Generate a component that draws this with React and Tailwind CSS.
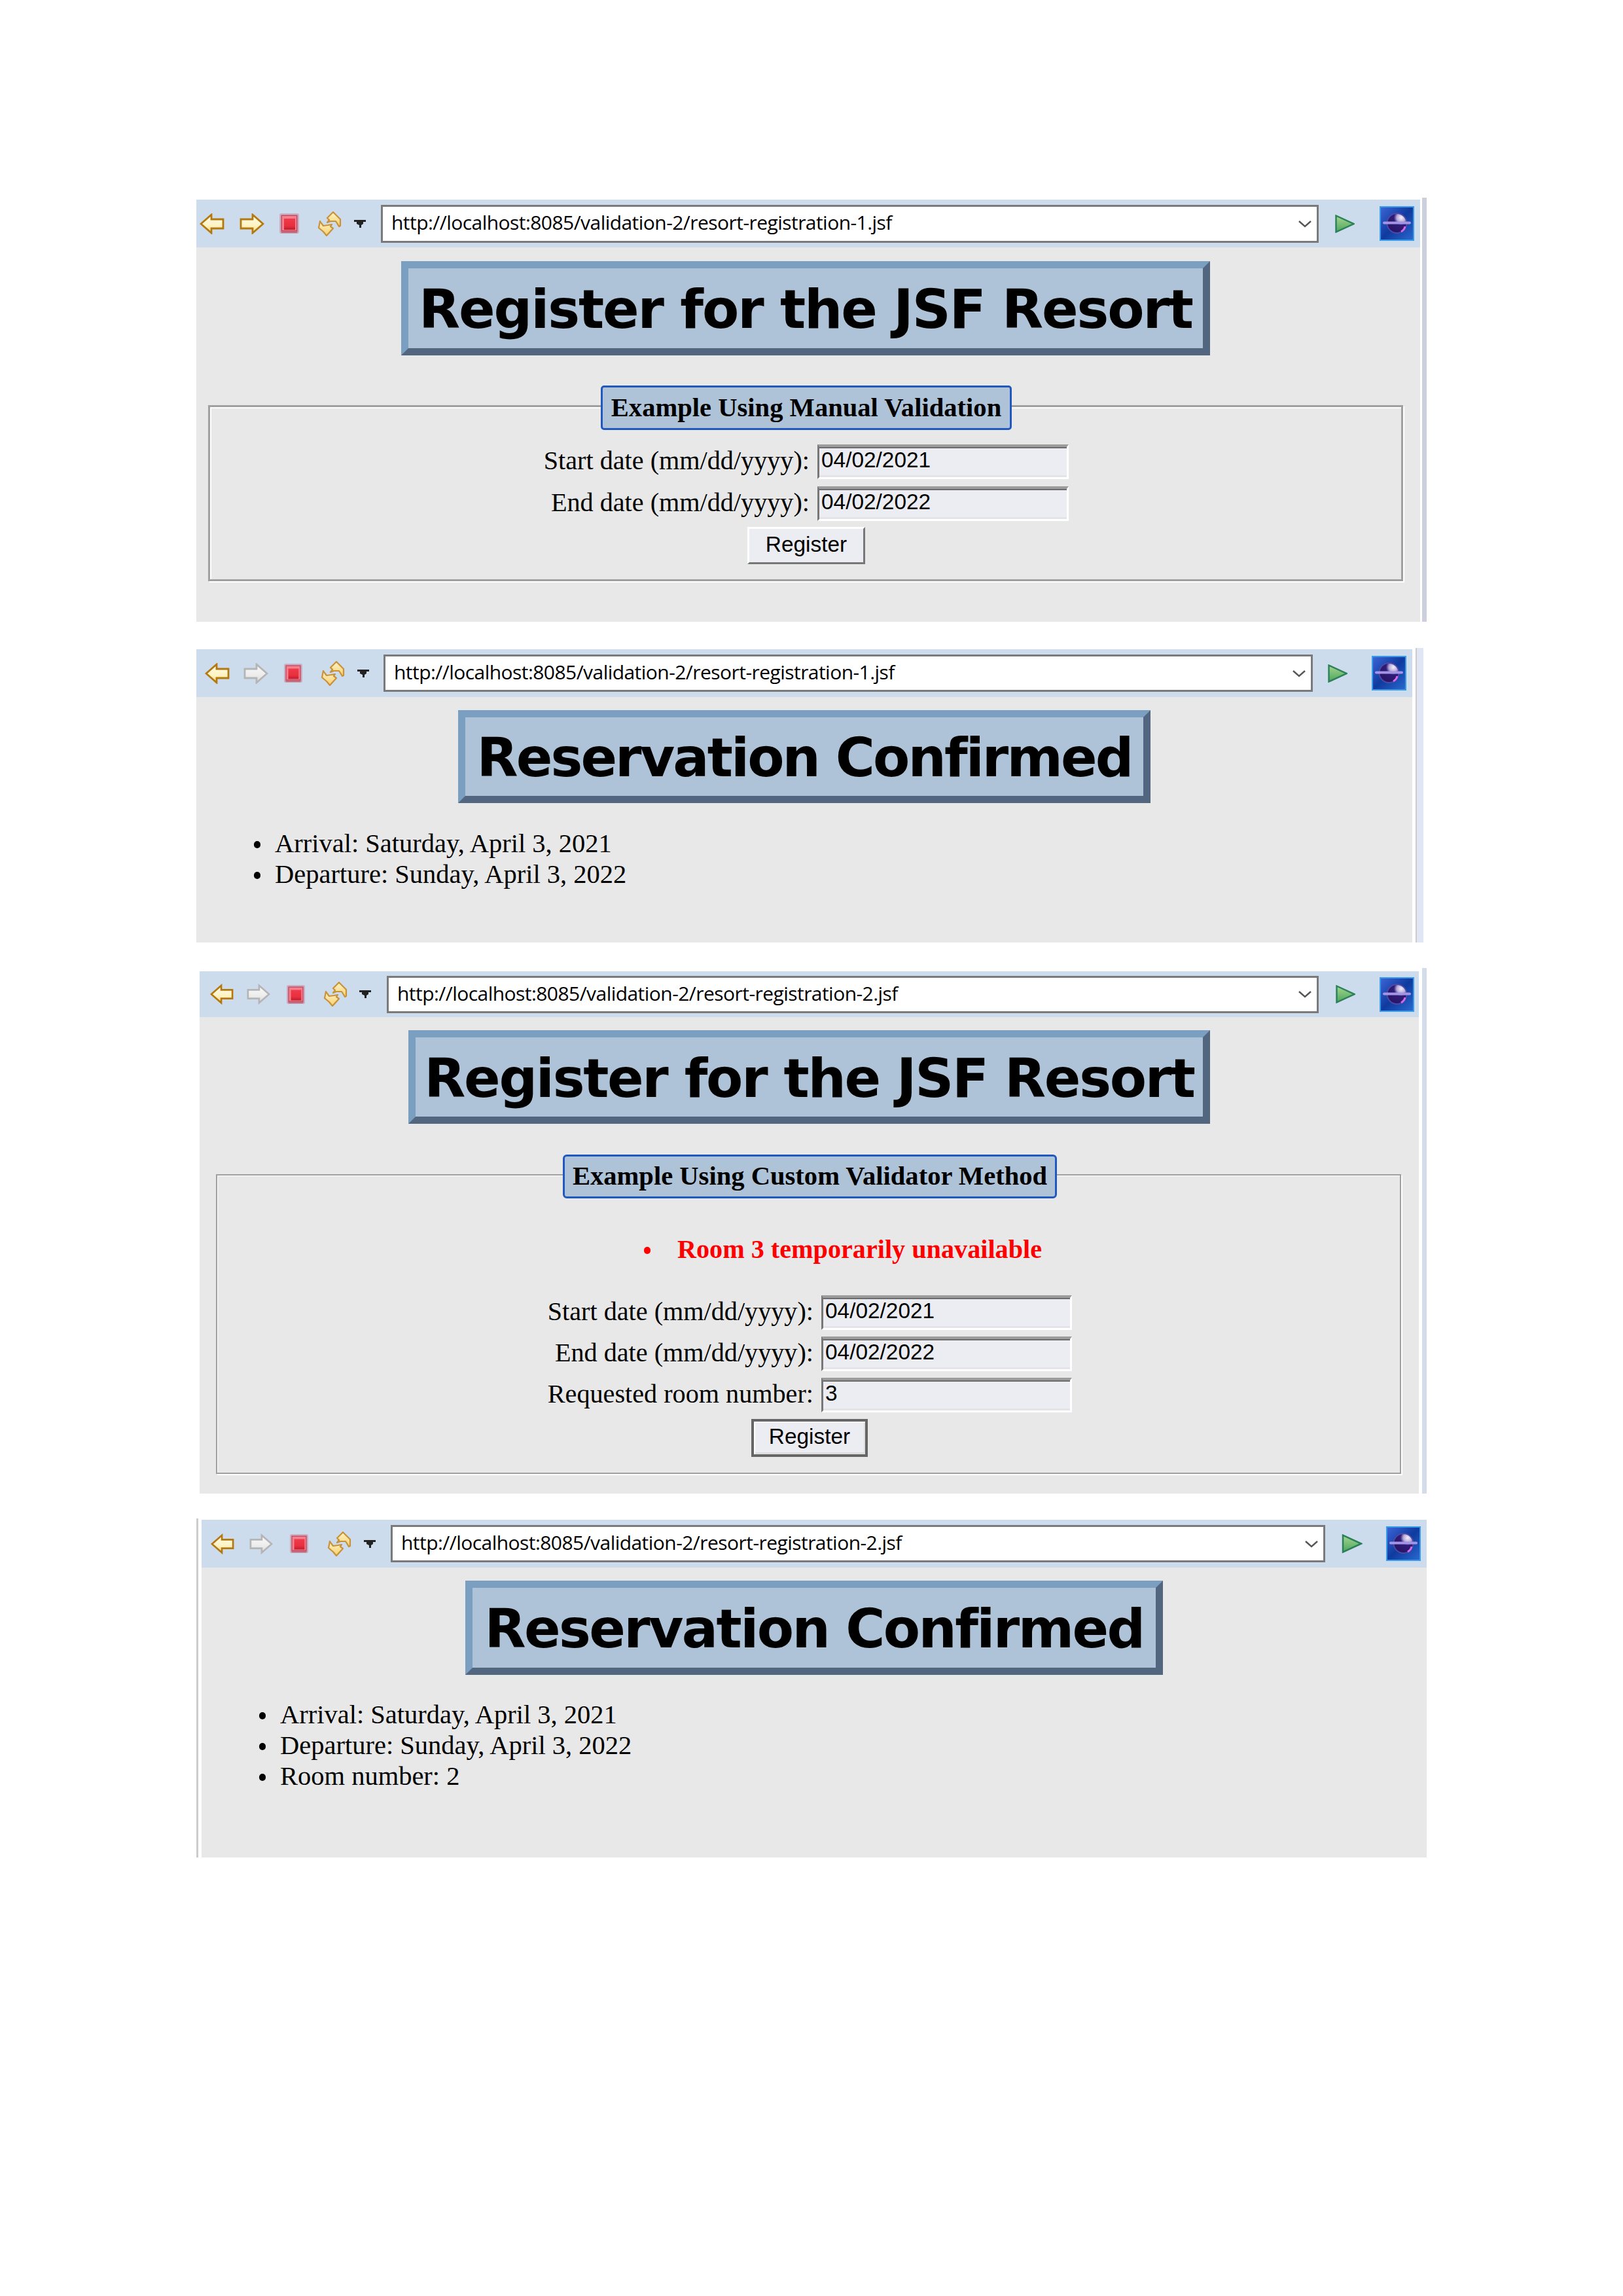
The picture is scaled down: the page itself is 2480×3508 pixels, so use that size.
import React from "react";

function Arrow({ dir = "left", on = true, cls }) {
  const id = `ar-${dir}-${on ? 1 : 0}`;
  const pts = "2,16 18,2 18,9 36,9 36,23 18,23 18,30";
  return (
    <svg viewBox="0 0 38 32" className={cls}>
      <defs>
        <linearGradient id={id} x1="0" y1="0" x2="0" y2="1">
          <stop offset="0" stopColor={on ? "#fffdf0" : "#fbfbfb"} />
          <stop offset="0.6" stopColor={on ? "#fff3c2" : "#ececec"} />
          <stop offset="1" stopColor={on ? "#f7d77c" : "#d8d8d8"} />
        </linearGradient>
      </defs>
      <polygon
        points={pts}
        transform={dir === "right" ? "matrix(-1 0 0 1 38 0)" : undefined}
        fill={`url(#${id})`}
        stroke={on ? "#b4780f" : "#b5b5b5"}
        strokeWidth="2.8"
        strokeLinejoin="miter"
      />
    </svg>
  );
}

function Stop({ cls }) {
  return (
    <svg viewBox="0 0 30 31" className={cls}>
      <defs>
        <linearGradient id="stopg" x1="0" y1="0" x2="0" y2="1">
          <stop offset="0" stopColor="#f03a4a" />
          <stop offset="0.65" stopColor="#e8303e" />
          <stop offset="1" stopColor="#c01c2c" />
        </linearGradient>
      </defs>
      <rect x="0" y="0" width="30" height="31" rx="3" fill="#c9596e" opacity="0.35" />
      <rect x="2.5" y="2.5" width="25" height="26" fill="#c04a60" />
      <rect x="4" y="4" width="22" height="22" fill="#f2808e" />
      <rect x="7" y="8" width="17" height="17" fill="url(#stopg)" />
      <rect x="3" y="27" width="24" height="3" fill="#c46a7c" />
    </svg>
  );
}

function Refresh({ cls }) {
  return (
    <svg viewBox="0 0 38 38" className={cls}>
      <defs>
        <linearGradient id="refg" x1="0" y1="0" x2="0" y2="1">
          <stop offset="0" stopColor="#fff4c8" />
          <stop offset="1" stopColor="#f6cf6e" />
        </linearGradient>
      </defs>
      <g fill="url(#refg)" stroke="#c8923a" strokeWidth="2.2" strokeLinejoin="round">
        <path d="M24 1 L15 10 L18 13 L15 17 L20 15 L28 15 L30 18 L33 23 L35 22 L35 12 L31 8 Z" />
        <path d="M4 15 L2 25 L9 31 L14 37 L24 26 L20 23 L22 20 L16 21 L9 22 L6 18 Z" />
      </g>
    </svg>
  );
}

function Caret({ cls }) {
  return (
    <svg viewBox="0 0 18 12" className={cls}>
      <polygon points="0,0 18,0 18,3 14,3 14,6 11,8 11,12 8,12 8,8 4,6 4,3 0,3" fill="#222" />
    </svg>
  );
}

function Chevron() {
  return (
    <svg viewBox="0 0 20 12" className="w-[20px] h-[12px] shrink-0">
      <path d="M1 2 L10 10 L19 2" fill="none" stroke="#555" strokeWidth="2.4" />
    </svg>
  );
}

function Play({ cls }) {
  return (
    <svg viewBox="0 0 30 28" className={cls}>
      <defs>
        <linearGradient id="playg" x1="0" y1="0" x2="0" y2="1">
          <stop offset="0" stopColor="#a5d690" />
          <stop offset="1" stopColor="#4da55c" />
        </linearGradient>
      </defs>
      <polygon points="1.5,1.5 28.5,14 1.5,26.5" fill="url(#playg)" stroke="#2a8058" strokeWidth="2.4" />
    </svg>
  );
}

function Globe({ cls }) {
  return (
    <svg viewBox="0 0 53 53" className={cls}>
      <defs>
        <linearGradient id="globeg" x1="0" y1="0" x2="1" y2="1">
          <stop offset="0" stopColor="#3d66d8" />
          <stop offset="0.5" stopColor="#0f3a9e" />
          <stop offset="1" stopColor="#2a6ad0" />
        </linearGradient>
        <radialGradient id="ballg" cx="0.72" cy="0.22" r="0.75">
          <stop offset="0" stopColor="#f4f0fa" />
          <stop offset="0.3" stopColor="#b5a8d8" />
          <stop offset="0.5" stopColor="#2e1c78" />
          <stop offset="1" stopColor="#2a1668" />
        </radialGradient>
      </defs>
      <rect x="1" y="1" width="51" height="51" fill="url(#globeg)" stroke="#3a9ce8" strokeWidth="2" />
      <circle cx="26.5" cy="26" r="15" fill="url(#ballg)" stroke="#4a4aa8" strokeWidth="2" />
      <path d="M33 39 Q38 36 39 31" fill="none" stroke="#d868e8" strokeWidth="3" />
      <rect x="5" y="23.5" width="43" height="4" rx="2" fill="#a494e6" />
    </svg>
  );
}

function Toolbar({ wrap, back, fwd, fwdOn = false, stop, refresh, caret, url, play, globe, text }) {
  return (
    <div className={`flex items-center bg-[#cddcec] ${wrap}`}>
      <Arrow dir="left" cls={back} />
      <Arrow dir="right" on={fwdOn} cls={fwd} />
      <Stop cls={stop} />
      <Refresh cls={refresh} />
      <Caret cls={caret} />
      <div className={`flex items-center justify-between bg-white border-[3px] border-[#7a7a7a] pl-[13px] pr-[8px] shrink-0 ${url}`}>
        <span className="pb-[4px] font-['Open_Sans',sans-serif] text-[30px] tracking-[-0.55px] text-black whitespace-nowrap">{text}</span>
        <Chevron />
      </div>
      <Play cls={play} />
      <Globe cls={globe} />
    </div>
  );
}

function Title({ cls, children }) {
  return (
    <h1 className={`flex items-center justify-center pt-[3px] border-[11px] border-t-[#7a9fc0] border-l-[#7a9fc0] border-r-[#52677f] border-b-[#52677f] bg-[#afc3d8] font-['DejaVu_Sans',sans-serif] font-bold text-[82px] text-black whitespace-nowrap ${cls}`}>
      {children}
    </h1>
  );
}

function Field({ label, value }) {
  return (
    <>
      <label className="text-right text-[40.2px] leading-[49px] text-black whitespace-nowrap">{label}</label>
      <input
        readOnly
        defaultValue={value}
        className="h-full w-full bg-[#ecedf2] border-t-[4px] border-l-[3px] border-r-[3px] border-b-[3px] border-t-[#9c9c9c] border-l-[#777777] border-r-white border-b-white shadow-[inset_0_2px_0_#6c6c6c,inset_0_-3px_0_#e4e4e8] pl-[3px] pb-[6px] font-['Liberation_Sans',sans-serif] text-[33.4px] text-black outline-none"
      />
    </>
  );
}

function Items({ items, cls }) {
  return (
    <ul className={`font-['Liberation_Serif',serif] text-[40.5px] text-black ${cls}`}>
      {items.map((t) => (
        <li key={t} className="flex items-center leading-[47px]">
          <span className="w-[10px] h-[11px] shrink-0 -ml-[32px] mr-[22px] mt-[3px] rounded-full bg-black" />
          <span className="whitespace-nowrap">{t}</span>
        </li>
      ))}
    </ul>
  );
}

export default function App() {
  return (
    <div className="w-[2480px] h-[3508px] bg-white pt-[302px] overflow-hidden font-['Liberation_Serif',serif]">
      {/* 1 */}
      <div className="flex ml-[300px] h-[648px]">
        <div className="mt-[3px] w-[1870px] h-[645px] bg-[#e8e8e8]">
          <Toolbar
            wrap="h-[73px]"
            back="w-[38px] h-[32px] ml-[5px] shrink-0"
            fwd="w-[38px] h-[32px] ml-[23px] shrink-0"
            fwdOn
            stop="w-[30px] h-[31px] ml-[23px] shrink-0"
            refresh="w-[38px] h-[38px] ml-[28px] shrink-0"
            caret="w-[18px] h-[12px] ml-[18px] shrink-0"
            url="w-[1433px] h-[58px] ml-[23px]"
            play="w-[30px] h-[28px] ml-[25px] shrink-0"
            globe="w-[53px] h-[53px] ml-[38px] shrink-0"
            text="http://localhost:8085/validation-2/resort-registration-1.jsf"
          />
          <Title cls="w-[1236px] h-[144px] ml-[313px] mt-[21px] tracking-[-2.1px]">Register for the JSF Resort</Title>
          <div className="ml-[18px] mt-[76px] w-[1826px] h-[269px] border-[3px] border-[#a0a0a0] shadow-[inset_2px_2px_0_#fff,2px_2px_0_#fff] flex flex-col">
            <div className="-mt-[33px] ml-[597px] w-[628px] h-[68px] flex items-center justify-center bg-[#afc3d8] border-[3px] border-[#2158c0] rounded-[5px] font-bold text-[40.6px] text-black whitespace-nowrap">
              Example Using Manual Validation
            </div>
            <div className="grid grid-cols-[916px_384px] gap-x-[12px] gap-y-[11px] auto-rows-[53px] mt-[22px]">
              <Field label="Start date (mm/dd/yyyy):" value="04/02/2021" />
              <Field label="End date (mm/dd/yyyy):" value="04/02/2022" />
            </div>
            <button className="mt-[9px] ml-[821px] w-[180px] h-[57px] pb-[3px] flex items-center justify-center bg-[#ecedf2] border-[3px] border-t-white border-l-white border-r-[#777777] border-b-[#777777] font-['Liberation_Sans',sans-serif] text-[33.4px] text-black">
              Register
            </button>
          </div>
        </div>
        <div className="ml-[3px] w-[7px] bg-[#ccd0dc]" />
      </div>

      {/* 2 */}
      <div className="flex ml-[300px] mt-[40px] h-[450px]">
        <div className="mt-[2px] w-[1858px] h-[448px] bg-[#e8e8e8]">
          <Toolbar
            wrap="h-[73px]"
            back="w-[38px] h-[32px] ml-[13px] shrink-0"
            fwd="w-[38px] h-[32px] ml-[21px] shrink-0"
            stop="w-[28px] h-[29px] ml-[24px] shrink-0"
            refresh="w-[38px] h-[38px] ml-[28px] shrink-0"
            caret="w-[18px] h-[12px] ml-[18px] shrink-0"
            url="w-[1420px] h-[57px] ml-[22px]"
            play="w-[30px] h-[28px] ml-[23px] shrink-0"
            globe="w-[53px] h-[53px] ml-[37px] shrink-0"
            text="http://localhost:8085/validation-2/resort-registration-1.jsf"
          />
          <Title cls="w-[1058px] h-[142px] ml-[400px] mt-[20px] tracking-[-2.9px]">Reservation Confirmed</Title>
          <Items
            cls="ml-[120px] mt-[38px]"
            items={["Arrival: Saturday, April 3, 2021", "Departure: Sunday, April 3, 2022"]}
          />
        </div>
        <div className="ml-[5px] w-[2px] bg-[#cccccc]" />
        <div className="w-[10px] bg-[#e0e6f5]" />
      </div>

      {/* 3 */}
      <div className="flex ml-[305px] mt-[39px] h-[803px]">
        <div className="mt-[5px] w-[1863px] h-[798px] bg-[#e8e8e8]">
          <Toolbar
            wrap="h-[70px]"
            back="w-[36px] h-[32px] ml-[16px] shrink-0"
            fwd="w-[36px] h-[32px] ml-[20px] shrink-0"
            stop="w-[28px] h-[29px] ml-[25px] shrink-0"
            refresh="w-[38px] h-[38px] ml-[28px] shrink-0"
            caret="w-[18px] h-[12px] ml-[17px] shrink-0"
            url="w-[1424px] h-[57px] ml-[24px]"
            play="w-[30px] h-[28px] ml-[26px] shrink-0"
            globe="w-[53px] h-[53px] ml-[37px] shrink-0"
            text="http://localhost:8085/validation-2/resort-registration-2.jsf"
          />
          <Title cls="w-[1225px] h-[143px] ml-[319px] mt-[20px] tracking-[-2.3px]">Register for the JSF Resort</Title>
          <div className="ml-[25px] mt-[77px] w-[1811px] h-[458px] border-[2px] border-[#a0a0a0] shadow-[inset_1px_1px_0_#fff,2px_2px_0_#fff] flex flex-col">
            <div className="-mt-[32px] ml-[528px] w-[755px] h-[67px] flex items-center justify-center bg-[#afc3d8] border-[3px] border-[#2158c0] rounded-[6px] font-bold text-[40.6px] text-black whitespace-nowrap">
              Example Using Custom Validator Method
            </div>
            <ul className="mt-[54px] ml-[652px] text-[40.2px] font-bold text-[#ff0000] leading-[47px]">
              <li className="flex items-center">
                <span className="w-[10px] h-[11px] shrink-0 mr-[41px] mt-[3px] rounded-full bg-[#ff0000]" />
                <span className="whitespace-nowrap">Room 3 temporarily unavailable</span>
              </li>
            </ul>
            <div className="grid grid-cols-[911px_383px] gap-x-[12px] gap-y-[10px] auto-rows-[53px] mt-[47px]">
              <Field label="Start date (mm/dd/yyyy):" value="04/02/2021" />
              <Field label="End date (mm/dd/yyyy):" value="04/02/2022" />
              <Field label="Requested room number:" value="3" />
            </div>
            <button className="mt-[10px] ml-[816px] w-[178px] h-[58px] pb-[3px] flex items-center justify-center bg-[#ecedf2] border-[4px] border-[#666666] shadow-[inset_2px_2px_0_#fff,inset_-2px_-3px_0_#ddd] font-['Liberation_Sans',sans-serif] text-[33.4px] text-black">
              Register
            </button>
          </div>
        </div>
        <div className="ml-[5px] w-[7px] bg-[#d4dbe9]" />
      </div>

      {/* 4 */}
      <div className="flex ml-[300px] mt-[38px] h-[518px]">
        <div className="w-[3px] bg-[#cccccc]" />
        <div className="ml-[5px] w-[1872px] h-[516px] mt-[2px] bg-[#e8e8e8]">
          <Toolbar
            wrap="h-[73px]"
            back="w-[36px] h-[32px] ml-[14px] shrink-0"
            fwd="w-[36px] h-[32px] ml-[23px] shrink-0"
            stop="w-[28px] h-[29px] ml-[26px] shrink-0"
            refresh="w-[38px] h-[38px] ml-[29px] shrink-0"
            caret="w-[18px] h-[12px] ml-[18px] shrink-0"
            url="w-[1428px] h-[57px] ml-[23px]"
            play="w-[32px] h-[29px] ml-[25px] shrink-0"
            globe="w-[53px] h-[53px] ml-[36px] shrink-0"
            text="http://localhost:8085/validation-2/resort-registration-2.jsf"
          />
          <Title cls="w-[1066px] h-[144px] ml-[403px] mt-[20px] tracking-[-2.6px]">Reservation Confirmed</Title>
          <Items
            cls="ml-[120px] mt-[37px]"
            items={[
              "Arrival: Saturday, April 3, 2021",
              "Departure: Sunday, April 3, 2022",
              "Room number: 2",
            ]}
          />
        </div>
      </div>
    </div>
  );
}
